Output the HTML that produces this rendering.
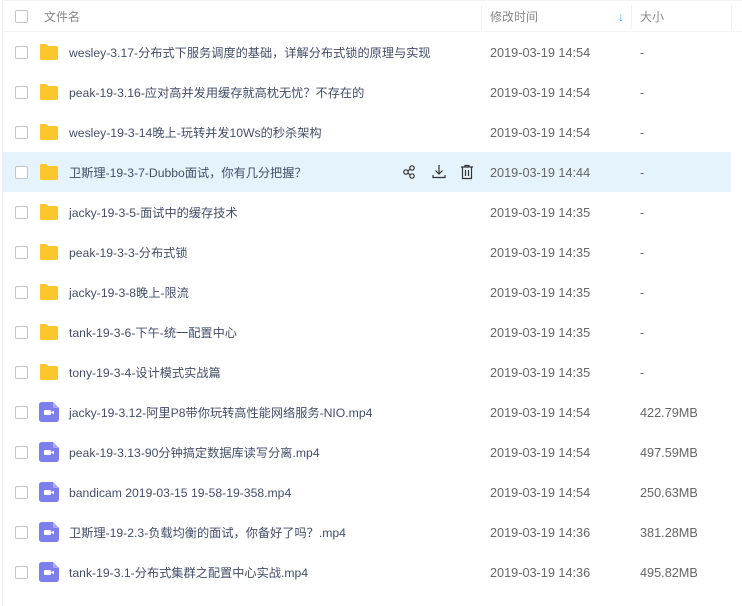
<!DOCTYPE html>
<html><head><meta charset="utf-8"><style>
*{margin:0;padding:0;box-sizing:border-box}
body{width:742px;height:606px;background:#fff;font-family:"Liberation Sans","Noto Sans CJK SC",sans-serif;font-size:12.7px;line-height:16px;color:#424e67;position:relative;overflow:hidden}
.lb{position:absolute;left:2px;top:0;width:1px;height:606px;background:#f0f0f0}
.hd{position:absolute;left:3px;top:0;width:739px;height:32px;border-top:1px solid #f2f2f2;border-bottom:1px solid #f2f2f2;color:#888}
.hd span{position:absolute;top:8px;font-size:12px}
.vd{position:absolute;top:4px;width:1px;height:24px;background:#f2f2f2}
.row{position:absolute;left:3px;width:728px;height:40px}
.row.hl{background:#e5f3fc}
.cb{position:absolute;left:12px;top:14px;width:13px;height:13px;border:1px solid #c4c4c4;border-radius:2px;background:#fff}
.ic{position:absolute;left:36px;top:11px}
.nm{position:absolute;left:66px;top:13px;white-space:nowrap;font-size:12.2px;height:16px}
.dt{position:absolute;left:487px;top:13px;color:#666}
.sz{position:absolute;left:637px;top:13px;color:#666}
.ops{position:absolute;left:398px;top:11px}
</style></head><body>
<div class="lb"></div>
<div class="hd">
<div class="cb" style="top:9px"></div>
<span style="left:41px">文件名</span>
<div class="vd" style="left:478px"></div>
<span style="left:487px">修改时间</span>
<span style="left:615px;color:#09aaff;font-weight:bold">↓</span>
<div class="vd" style="left:628px"></div>
<span style="left:637px">大小</span>
<div class="vd" style="left:728px"></div>
</div>
<div id="rows"></div>
<script>
var d=[["wesley-3.17-分布式下服务调度的基础，详解分布式锁的原理与实现","2019-03-19 14:54","-",0],
["peak-19-3.16-应对高并发用缓存就高枕无忧？不存在的","2019-03-19 14:54","-",0],
["wesley-19-3-14晚上-玩转并发10Ws的秒杀架构","2019-03-19 14:54","-",0],
["卫斯理-19-3-7-Dubbo面试，你有几分把握？","2019-03-19 14:44","-",0],
["jacky-19-3-5-面试中的缓存技术","2019-03-19 14:35","-",0],
["peak-19-3-3-分布式锁","2019-03-19 14:35","-",0],
["jacky-19-3-8晚上-限流","2019-03-19 14:35","-",0],
["tank-19-3-6-下午-统一配置中心","2019-03-19 14:35","-",0],
["tony-19-3-4-设计模式实战篇","2019-03-19 14:35","-",0],
["jacky-19-3.12-阿里P8带你玩转高性能网络服务-NIO.mp4","2019-03-19 14:54","422.79MB",1],
["peak-19-3.13-90分钟搞定数据库读写分离.mp4","2019-03-19 14:54","497.59MB",1],
["bandicam 2019-03-15 19-58-19-358.mp4","2019-03-19 14:54","250.63MB",1],
["卫斯理-19-2.3-负载均衡的面试，你备好了吗？.mp4","2019-03-19 14:36","381.28MB",1],
["tank-19-3.1-分布式集群之配置中心实战.mp4","2019-03-19 14:36","495.82MB",1]];
var folder='<svg width="20" height="18" viewBox="0 0 20 18"><path d="M1 2.5Q1 1 2.5 1H7.5L9.5 3H17.5Q19 3 19 4.5V15.5Q19 17 17.5 17H2.5Q1 17 1 15.5Z" fill="#fcc72c"/></svg>';
var video='<svg width="20" height="20" viewBox="0 0 20 20" style="margin-top:-1px"><path d="M3 0H14L20 6V17Q20 20 17 20H3Q0 20 0 17V3Q0 0 3 0Z" fill="#7d80ec"/><path d="M14 0L20 6H15.5Q14 6 14 4.5Z" fill="#a7a9f4"/><rect x="5" y="8" width="7" height="5" rx="1" fill="#fff"/><path d="M12 10.5L15 8.5V12.5Z" fill="#fff"/></svg>';
var ops='<svg width="80" height="18" viewBox="0 0 80 18" fill="none" stroke="#333" stroke-width="1.2"><circle cx="5" cy="9" r="2.2"/><circle cx="11" cy="5" r="2.2"/><circle cx="11" cy="13" r="2.2"/><path d="M7 8L9 6M7 10L9 12"/><path d="M38 2V11M34.5 7.5L38 11L41.5 7.5M32 12V14.5H44V12"/><path d="M60 4H72M64 4V2.5H68V4M61.5 4V15.5H70.5V4M64.5 7V13M67.5 7V13"/></svg>';
var h='';
d.forEach(function(r,i){
h+='<div class="row'+(i==3?' hl':'')+'" style="top:'+(32+i*40)+'px"><div class="cb"></div><div class="ic">'+(r[3]?video:folder)+'</div><div class="nm">'+r[0]+'</div>'+(i==3?'<div class="ops">'+ops+'</div>':'')+'<div class="dt">'+r[1]+'</div><div class="sz">'+r[2]+'</div></div>';
});
document.getElementById('rows').innerHTML=h;
</script>
</body></html>
